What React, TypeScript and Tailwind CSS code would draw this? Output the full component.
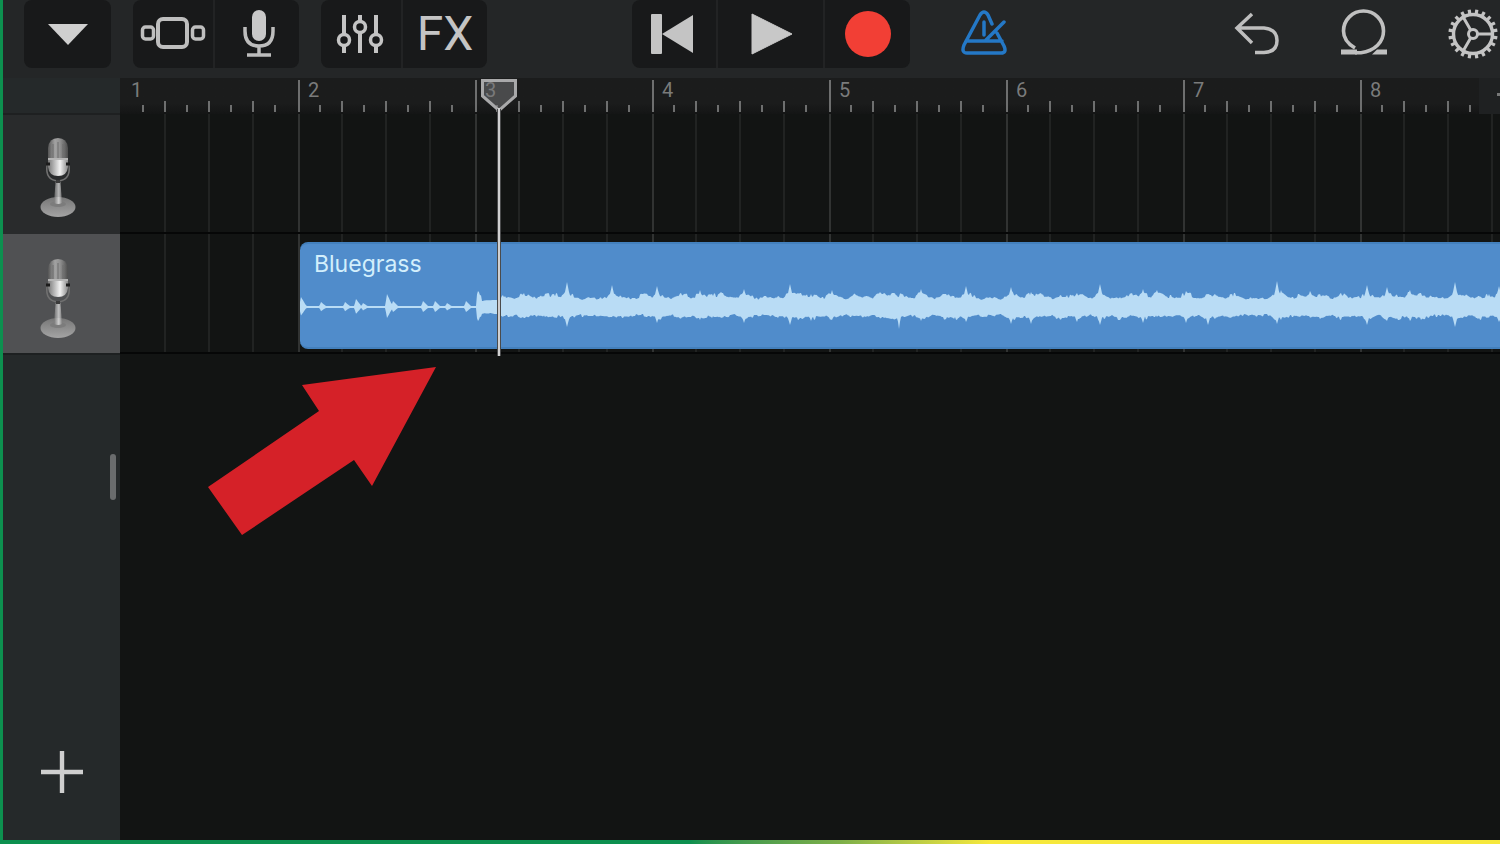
import React from "react";

const BARS = [1, 2, 3, 4, 5, 6, 7, 8];

/** x position, height above the axis, depth below the axis */
const PEAKS: [number, number, number][] = [
  [178, 16, 14], [205, 11, 9], [224, 14, 11], [245, 13, 10], [254, 13, 10], [267, 25, 20], [290, 9, 9],
  [312, 22, 10], [323, 10, 11], [344, 13, 7], [357, 21, 16], [381, 14, 11], [400, 17, 13], [412, 13, 11],
  [421, 15, 11], [444, 18, 16], [466, 11, 8], [478, 11, 11], [490, 23, 18], [498, 14, 13], [511, 13, 14],
  [532, 17, 13], [555, 13, 9], [566, 11, 10], [580, 15, 11], [591, 13, 12], [601, 13, 10],
  [621, 18, 14], [646, 13, 12], [654, 11, 12], [666, 21, 15], [690, 10, 8], [711, 20, 17], [722, 10, 10],
  [731, 15, 17], [741, 13, 10], [760, 11, 12], [767, 12, 11], [777, 14, 15], [800, 23, 18], [820, 10, 13],
  [832, 14, 9], [843, 18, 16], [857, 17, 10], [870, 11, 9], [886, 16, 16], [908, 13, 18], [915, 13, 12],
  [932, 13, 10], [953, 9, 8], [977, 26, 17], [981, 17, 13], [1000, 12, 10], [1010, 16, 10], [1020, 13, 12],
  [1041, 14, 12], [1056, 10, 10], [1067, 22, 18], [1087, 20, 14], [1096, 12, 12], [1110, 17, 14],
  [1121, 13, 13], [1130, 11, 8], [1155, 25, 20], [1163, 12, 10], [1178, 10, 12], [1189, 13, 10], [1199, 21, 15],
];

const QUIET: [number, number][] = [[1, 10], [21, 5], [45, 5], [56, 8], [63, 4], [87, 13], [93, 6], [123, 6], [135, 6], [147, 4], [166, 6]];

function wavePoints() {
  const top: string[] = [];
  const bottom: string[] = [];
  for (let x = 0; x <= 1200; x += 1) {
    let up = 1;
    let down = 1;
    if (x < 177) {
      for (const [px, h] of QUIET) {
        const d = x - px;
        const k = d < 0 ? 1 + d / 2 : 1 - d / 6;
        up = Math.max(up, h * k);
        down = Math.max(down, h * 0.85 * k);
      }
    } else {
      const cell = Math.floor(x / 2);
      const n = Math.abs(Math.sin(cell * 12.9898) * 43758.5453) % 1;
      const m = Math.abs(Math.sin(cell * 78.233) * 12543.123) % 1;
      up = 6 + n * 4;
      down = 6 + m * 4;
      for (const [px, u, dn] of PEAKS) {
        const d = x - px;
        const reach = Math.min(1, 1.25 * Math.max(0, 1 - Math.abs(d) / (d < 0 ? 11 : 16)));
        const spike = Math.max(0, 1 - Math.abs(d) / 5);
        up = Math.max(up, 7 + Math.min(u - 6, 8) * reach - n * 4, u * spike);
        down = Math.max(down, 7 + Math.min(dn - 6, 6) * reach - m * 4, dn * spike);
      }
      if (x > 181 && x < 199) {
        up = 6 + n;
        down = 6 + m;
      }
      down = Math.max(down, 22 * (1 - Math.abs(x - 599) / 3));
    }
    top.push(`${x},${(29 - up).toFixed(1)}`);
    bottom.unshift(`${x},${(29 + down).toFixed(1)}`);
  }
  return [...top, ...bottom].join(" ");
}

function ToolButton({ label, className, children }: { label: string; className: string; children: React.ReactNode }) {
  return (
    <button type="button" aria-label={label} className={`flex h-[68px] items-center justify-center ${className}`}>
      {children}
    </button>
  );
}

function ToolGroup({ children }: { children: React.ReactNode }) {
  return <div className="flex divide-x-2 divide-[#222324] overflow-hidden rounded-lg bg-[#18191a]">{children}</div>;
}

function GearIcon() {
  const teeth = Array.from({ length: 20 }, (_, i) => i * 18 + 9);
  return (
    <svg width="50" height="50" viewBox="-25 -25 50 50" fill="none" stroke="#c4c4c4" strokeWidth="3">
      <circle r="19.5" strokeWidth="3.4" />
      <circle r="4.5" />
      <path d="M5 0H20M-2.5 -4.3L-10 -17.3M-2.5 4.3L-10 17.3" />
      {teeth.map((a) => (
        <path key={a} d="M20 0H24.6" transform={`rotate(${a})`} strokeWidth="3.2" />
      ))}
    </svg>
  );
}

function StudioMic({ id }: { id: string }) {
  return (
    <svg width="36" height="80" viewBox="0 0 36 80">
      <defs>
        <linearGradient id={`${id}-body`} x1="0" x2="1">
          <stop offset="0" stopColor="#555" />
          <stop offset="0.35" stopColor="#a2a2a2" />
          <stop offset="0.6" stopColor="#919191" />
          <stop offset="1" stopColor="#4d4d4d" />
        </linearGradient>
        <linearGradient id={`${id}-low`} x1="0" x2="1">
          <stop offset="0" stopColor="#777" />
          <stop offset="0.6" stopColor="#f2f2f2" />
          <stop offset="1" stopColor="#888" />
        </linearGradient>
        <linearGradient id={`${id}-base`} x1="0" y1="0" x2="0" y2="1">
          <stop offset="0" stopColor="#777" />
          <stop offset="1" stopColor="#a4a4a4" />
        </linearGradient>
      </defs>
      <ellipse cx="18" cy="69" rx="17.5" ry="10" fill={`url(#${id}-base)`} />
      <ellipse cx="18" cy="66" rx="8" ry="3" fill="#7c7c7c" />
      <path d="M15.5 44h5l1.5 21q-4 2-8 0z" fill={`url(#${id}-low)`} opacity="0.7" />
      <path d="M7 27q-2 15 11 16q13-1 11-16" fill="none" stroke="#707070" strokeWidth="1.500" />
      <path d="M8 10Q9 0 18 0T28 10V21H8z" fill={`url(#${id}-body)`} />
      <path d="M13 6V20M18 4V20M23 6V20" stroke="#6c6c6c" strokeWidth="1" />
      <path d="M8 22H28V29Q27 38 18 38T8 29z" fill={`url(#${id}-low)`} />
      <path d="M8 21H28" stroke="#b5b5b5" strokeWidth="2" />
      <path d="M6 26H10M26 26H30" stroke="#1c1c1c" strokeWidth="3" />
      <path d="M16 42h4v3h-4z" fill="#3a3a3a" />
    </svg>
  );
}

function RulerBar({ n }: { n: number }) {
  return (
    <div className="grid w-[177px] shrink-0">
      <svg className="[grid-area:1/1]" width="177" height="35" stroke="#6e6f6f" strokeWidth="2">
        {n > 1 && <path d="M0 2V34" strokeWidth="4" />}
        <path d="M44 23V34M88 23V34M132 23V34" />
        <path d="M22 27V34M66 27V34M110 27V34M154 27V34" />
      </svg>
      <span className="pl-[10px] pt-[1px] text-[20px] leading-[22px] text-[#7a7b7b] [grid-area:1/1]">{n}</span>
    </div>
  );
}

function Lane({ children }: { children?: React.ReactNode }) {
  return (
    <div className="grid grid-cols-1 overflow-hidden border-b-2 border-[#060707] bg-[#121413]">
      <div className="flex overflow-hidden pl-[1px] [grid-area:1/1]">
        {BARS.map((n) => (
          <svg key={n} className="shrink-0" width="177" height="118" stroke="#212322" strokeWidth="2">
            {n > 1 && <path d="M0 0V118" stroke="#313332" strokeWidth="4" />}
            <path d="M44 0V118M88 0V118M132 0V118" />
          </svg>
        ))}
      </div>
      {children}
    </div>
  );
}

export default function App() {
  return (
    <div className="flex min-h-screen flex-col overflow-hidden bg-[#121413] font-[Roboto,'Liberation_Sans',sans-serif]">
      <div className="flex flex-1 flex-col border-l-3 border-[#0d904f]">
        <header className="flex h-[78px] items-start bg-[#242627] pr-[2px] pl-[21px]">
          <div className="flex gap-[22px]">
            <ToolGroup>
              <ToolButton label="Browser" className="w-[87px]">
                <svg width="40" height="22" viewBox="0 0 40 22"><path d="M0 1H40L20 22z" fill="#cfcfcf" /></svg>
              </ToolButton>
            </ToolGroup>
            <ToolGroup>
              <ToolButton label="Tracks view" className="w-[82px]">
                <svg width="66" height="34" viewBox="0 0 66 34" fill="none" stroke="#bebebe" strokeWidth="4">
                  <rect x="18" y="2" width="29" height="28" rx="5" />
                  <rect x="2.500" y="10" width="11" height="12" rx="3" strokeWidth="3.500" />
                  <rect x="52.500" y="10" width="11" height="12" rx="3" strokeWidth="3.500" />
                </svg>
              </ToolButton>
              <ToolButton label="Audio recorder" className="w-[84px] pl-[4px]">
                <svg width="32" height="48" viewBox="0 0 32 48" fill="none" stroke="#bdbdbd" strokeWidth="3.500">
                  <rect x="9" y="0" width="14" height="31" rx="7" fill="#c8c8c8" stroke="none" />
                  <path d="M2 17V21Q2 36 16 36T30 21V17M16 36V45M4 45H28" />
                </svg>
              </ToolButton>
            </ToolGroup>
            <ToolGroup>
              <ToolButton label="Track controls" className="w-[82px] pr-[2px]">
                <svg width="48" height="40" viewBox="0 0 48 40" fill="none" stroke="#c4c4c4" strokeWidth="4">
                  <path d="M8 1V21M8 31V39M24 1V8M24 18V39M40 1V21M40 31V39" />
                  <circle cx="8" cy="26" r="5.500" strokeWidth="3.500" />
                  <circle cx="24" cy="13" r="5.500" strokeWidth="3.500" />
                  <circle cx="40" cy="26" r="5.500" strokeWidth="3.500" />
                </svg>
              </ToolButton>
              <ToolButton label="FX" className="w-[84px] text-[48px] leading-none text-[#c4c4c4]">FX</ToolButton>
            </ToolGroup>
          </div>
          <div className="ml-[145px] flex items-center">
            <ToolGroup>
              <ToolButton label="Go to beginning" className="w-[86px] pr-[4px]">
                <svg width="42" height="40" viewBox="0 0 42 40" fill="#c4c4c4">
                  <rect width="11" height="40" rx="1" /><path d="M11 20L42 1V39z" />
                </svg>
              </ToolButton>
              <ToolButton label="Play" className="w-[107px] pl-[2px]">
                <svg width="42" height="42" viewBox="0 0 42 42"><path d="M1 1L41 21L1 41z" fill="#c8c8c8" stroke="#c8c8c8" strokeLinejoin="round" /></svg>
              </ToolButton>
              <ToolButton label="Record" className="w-[85px]">
                <span className="size-[46px] rounded-full bg-[#f23f35]" />
              </ToolButton>
            </ToolGroup>
            <ToolButton label="Metronome" className="ml-[51px] w-[46px]">
              <svg width="46" height="48" viewBox="0 0 46 48" fill="none" stroke="#2478c6" strokeWidth="3.500" strokeLinecap="round" strokeLinejoin="round">
                <path d="M31 14L27 5Q23 -1 19 5L3 35Q0 43 6 43H40Q46 43 43 36L36 23M5 31H41M23 12V25M43 12L24 31" />
              </svg>
            </ToolButton>
          </div>
          <div className="ml-auto flex gap-[61px]">
            <ToolButton label="Undo" className="w-[46px]">
              <svg width="46" height="44" viewBox="0 0 46 44" fill="none" stroke="#bebebe" strokeWidth="3.500">
                <path d="M18 2L3 16L18 31M3 16H30Q43 17 43 28.500T30 40.500H21" />
              </svg>
            </ToolButton>
            <ToolButton label="Loop browser" className="w-[46px]">
              <svg width="46" height="50" viewBox="0 0 46 50" fill="none" stroke="#c0c0c0" strokeWidth="3.600">
                <path d="M0 43H16" strokeWidth="5" />
                <path d="M14 43.700H20C34 42 42.500 33 42.500 22A20 20 0 1 0 2.500 22C2.500 29 7 35 14 39" />
                <path d="M31 45.500L36 40.500H46V45.500z" fill="#c0c0c0" stroke="none" />
              </svg>
            </ToolButton>
            <ToolButton label="Settings" className="w-[50px]"><GearIcon /></ToolButton>
          </div>
        </header>

        <main className="flex flex-1">
          <aside className="flex w-[117px] shrink-0 flex-col bg-[#25292a]">
            <div className="h-[37px] border-b-2 border-[#1e2021]" />
            <button type="button" aria-label="Track 1" className="flex h-[119px] items-center justify-center bg-[#292b2c] pr-[7px] pt-[6px]">
              <StudioMic id="mic-a" />
            </button>
            <button type="button" aria-label="Track 2, Bluegrass" className="flex h-[119px] items-center justify-center bg-[#505153] pr-[7px] pt-[10px]">
              <StudioMic id="mic-b" />
            </button>
            <div className="flex flex-1 flex-col items-end justify-between border-t-2 border-[#1d2021] pt-[99px] pr-[4px] pb-[46px]">
              <div className="h-[46px] w-[6px] rounded-full bg-[#6a6c6d]" />
              <button type="button" aria-label="Add track" className="mr-[32px]">
                <svg width="44" height="44" viewBox="0 0 44 44" stroke="#cfcfcf" strokeWidth="4.400"><path d="M1 22H43M22 1V43" /></svg>
              </button>
            </div>
          </aside>

          <section aria-label="Timeline" className="relative min-w-0 flex-1 overflow-hidden">
            <div className="flex h-[36px] bg-[#1f2122]">
              <div className="flex min-w-0 flex-1 overflow-hidden bg-gradient-to-b from-[#1b1c1c] from-70% to-[#141515] pl-[1px]">
                {BARS.map((n) => <RulerBar key={n} n={n} />)}
              </div>
              <div className="flex w-[21px] shrink-0 justify-end pt-[15px]">
                <span className="size-[3px] bg-[#777878]" />
              </div>
            </div>
            <Lane />
            <Lane>
              <div className="z-10 mt-[8px] ml-[180px] h-[107px] overflow-hidden rounded-l-lg border-y-2 border-[#4380bd] bg-[#508ccb] [grid-area:1/1]">
                <p className="pt-[6px] pl-[14px] font-[Inter,sans-serif] text-[23px] leading-[28px] text-[#d3effc]">Bluegrass</p>
                <svg width="1200" height="58" viewBox="0 0 1200 58" role="img" aria-label="Audio waveform">
                  <polygon points={wavePoints()} fill="#b9dcf5" />
                </svg>
              </div>
            </Lane>

            <svg className="absolute top-[1px] left-[361px] z-20" width="36" height="277" viewBox="0 0 36 277" role="img" aria-label="Playhead">
              <path d="M1.500 1.500H34.500V17L18 31.500L1.500 17z" fill="#777779" fillOpacity="0.5" stroke="#a9a9aa" strokeWidth="3" />
              <path d="M18 30V277" stroke="#4a4b4c" strokeWidth="4" />
              <path d="M18 29V277" stroke="#d0d0d1" strokeWidth="2" />
            </svg>
            <svg className="absolute top-[289px] left-[88px] z-20" width="229" height="169" viewBox="0 0 229 169" role="img" aria-label="Arrow">
              <path d="M0 120L111 44L94 18L228 0L164 119L146 93L34 168z" fill="#d52128" />
            </svg>
          </section>
        </main>
      </div>
      <footer className="h-[4px] bg-gradient-to-r from-[#0d904f] from-46% via-[#7caf49] via-56% to-[#f6e83b] to-66%" />
    </div>
  );
}
